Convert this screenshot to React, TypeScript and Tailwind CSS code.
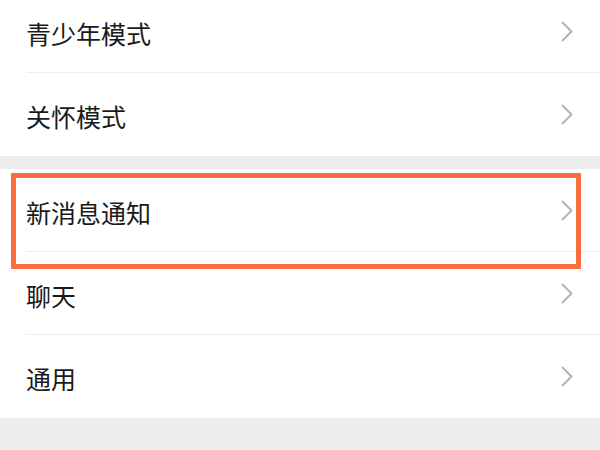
import { ReactNode } from "react"

function Chevron() {
  return (
    <svg width="12" height="21" viewBox="0 0 12 21" fill="none" className="shrink-0">
      <polyline
        points="1.5,1.5 10.5,10.5 1.5,19.5"
        stroke="#b3b3b3"
        strokeWidth="2"
        strokeLinecap="round"
        strokeLinejoin="round"
      />
    </svg>
  )
}

function Row({ label, divider = true }: { label: string; divider?: boolean }) {
  return (
    <div className="pl-[26px] bg-white">
      <div
        className={
          "h-[83px] flex items-center justify-between pr-[27px] " +
          (divider ? "border-b border-[#ededed]" : "")
        }
      >
        <span className="text-[25px] leading-none text-[#1a1a1a] pt-[4px]">{label}</span>
        <Chevron />
      </div>
    </div>
  )
}

function Group({ children }: { children: ReactNode }) {
  return <div className="bg-white">{children}</div>
}

export default function App() {
  return (
    <div
      className="w-[600px] h-[450px] overflow-hidden bg-[#ededed] relative"
      style={{ fontFamily: '"Noto Sans CJK SC", "Noto Sans", sans-serif' }}
    >
      <div className="-mt-[10px]">
        <Group>
          <Row label="青少年模式" />
          <Row label="关怀模式" divider={false} />
        </Group>
        <div className="h-[13px]" />
        <Group>
          <Row label="新消息通知" />
          <Row label="聊天" />
          <Row label="通用" divider={false} />
        </Group>
      </div>

      {/* highlight box */}
      <div className="absolute left-[11px] top-[173px] w-[570px] h-[96px] border-[5px] border-[#fb6d3f] pointer-events-none" />
    </div>
  )
}
